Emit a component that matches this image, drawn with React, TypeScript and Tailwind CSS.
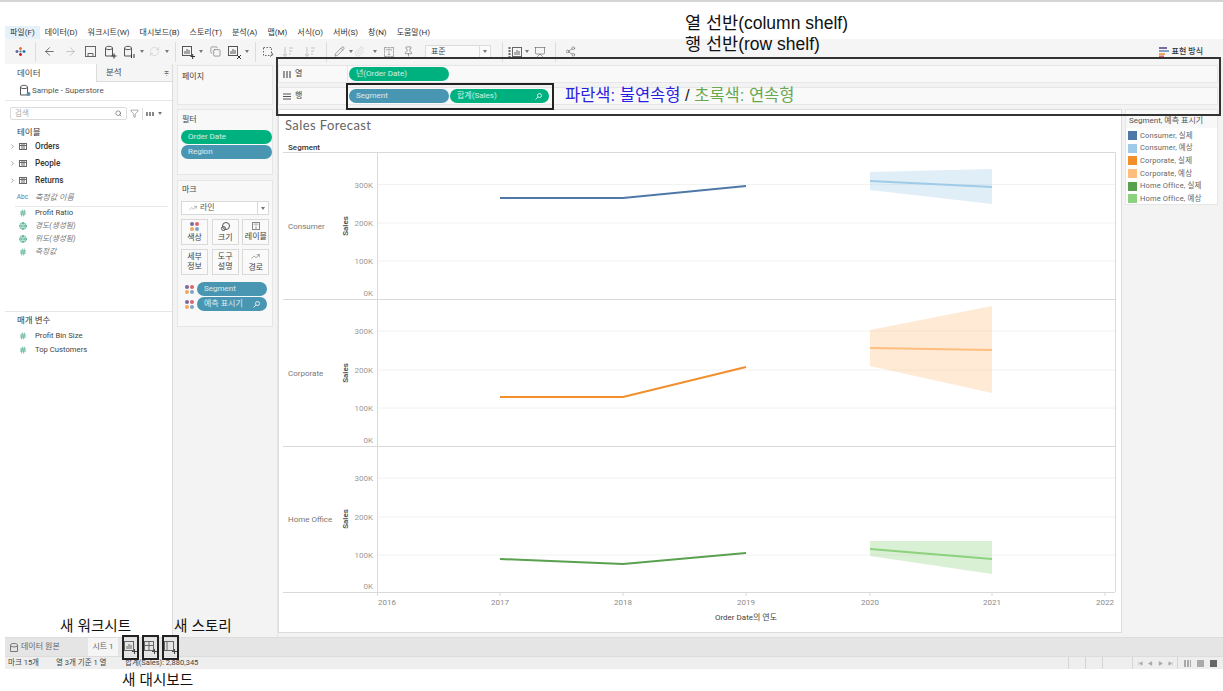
import React from "react";
import {
    ArrowLeft,
    ArrowRight,
    RefreshCw,
    Copy,
    Pencil,
    Paperclip,
    Pin,
    Presentation,
    Share2,
    Search,
    Filter,
    Hash,
    Globe,
    ChevronRight,
    Type,
    TrendingUp,
    SkipBack,
    SkipForward,
    Play,
} from "lucide-react";

const menus = [
    "파일(F)", "데이터(D)", "워크시트(W)", "대시보드(B)", "스토리(T)", "분석(A)",
    "맵(M)", "서식(O)", "서버(S)", "창(N)", "도움말(H)",
];

function Slot({ w, children }: { w: number; children?: React.ReactNode }) {
    return (
        <div className="flex items-center justify-center shrink-0" style={{ width: w }}>
            {children}
        </div>
    );
}

function Divider() {
    return <div className="w-px h-[20px] bg-[#dcdcdc] shrink-0" />;
}

function Caret() {
    return <div className="w-0 h-0 shrink-0 border-x-[2px] border-x-transparent border-t-[3px] border-t-[#777]" />;
}

function TinyChart({ mark }: { mark?: React.ReactNode }) {
    return (
        <svg width="14" height="14" viewBox="0 0 14 14" fill="none" stroke="#555" className="shrink-0">
            <rect x="1.5" y="1.5" width="9" height="9" />
            <path d="M4 9V6M6 9V4M8 9V5" />
            {mark}
        </svg>
    );
}

function SheetIcon({ kind }: { kind: "sheet" | "dash" | "story" }) {
    return (
        <svg width="14" height="14" viewBox="0 0 14 14" fill="none" stroke="#666" className="shrink-0">
            <rect x="1.5" y="1.5" width="9" height="9" />
            {kind === "sheet" && <path d="M4 9V6M6 9V4M8 9V5" />}
            {kind === "dash" && <path d="M1.5 5.5H10.5M6 1.5V10.5" />}
            {kind === "story" && <path d="M4 1.5V10.5" />}
            <path d="M9 11.5H14M11.5 9V14" stroke="#444" />
        </svg>
    );
}

function SourceIcon({ mark }: { mark: React.ReactNode }) {
    return (
        <svg width="13" height="14" viewBox="0 0 13 14" fill="none" stroke="#555" className="shrink-0">
            <path d="M1.5 3C1.5 .8 8.5 .8 8.5 3V11H1.5ZM1.5 3.5C3 5 7 5 8.5 3.5" />
            {mark}
        </svg>
    );
}

function SortIcon() {
    return (
        <svg width="12" height="12" viewBox="0 0 12 12" fill="none" stroke="#c4c4c4" className="shrink-0">
            <path d="M3 1V10M1 8L3 10.5L5 8M7 2H11M7 5H10M7 8H9" />
        </svg>
    );
}

function ZoomMark() {
    return (
        <svg width="7" height="7" viewBox="0 0 7 7" fill="none" stroke="currentColor" className="shrink-0">
            <circle cx="4.5" cy="2.5" r="2" />
            <path d="M3 4L.5 6.5" />
        </svg>
    );
}

function TableIcon() {
    return (
        <svg width="8" height="7" viewBox="0 0 8 7" className="shrink-0">
            <rect x="0.5" y="0.5" width="7" height="6" fill="#fff" stroke="#666" />
            <path d="M0 2.5H8M3 0V7M5 0V7" stroke="#666" />
        </svg>
    );
}

function Dots() {
    return (
        <div className="grid grid-cols-2 gap-[1px] w-[9px] shrink-0">
            <span className="w-[4px] h-[4px] rounded-full bg-[#7b6a9b]" />
            <span className="w-[4px] h-[4px] rounded-full bg-[#e0636b]" />
            <span className="w-[4px] h-[4px] rounded-full bg-[#f2a65a]" />
            <span className="w-[4px] h-[4px] rounded-full bg-[#7fa3cc]" />
        </div>
    );
}

function Pill({ color, label, w, icon }: { color: "blue" | "green"; label: string; w: string; icon?: boolean }) {
    return (
        <div
            className={`${w} h-[14px] rounded-full flex items-center justify-between pl-[7px] pr-[7px] text-[8px] text-white/80 shrink-0 ${
                color === "blue" ? "bg-[#4996b2]" : "bg-[#00b180]"
            }`}
        >
            <span>{label}</span>
            {icon && <ZoomMark />}
        </div>
    );
}

function Field({ icon, label, italic, y }: { icon: React.ReactNode; label: string; italic?: boolean; y: string }) {
    return (
        <div className={`flex items-center ${y} pl-[9px] shrink-0`}>
            <div className="w-[17px] flex justify-center shrink-0">{icon}</div>
            <span className={`ml-[4px] text-[7.7px] ${italic ? "italic text-[#777]" : "text-[#444]"}`}>{label}</span>
        </div>
    );
}

function TableRow({ label }: { label: string }) {
    return (
        <div className="flex items-center h-[17px] pl-[4px] shrink-0">
            <ChevronRight size={7} className="text-[#666] shrink-0" />
            <div className="ml-[3px]"><TableIcon /></div>
            <span className="ml-[8px] text-[8.2px] font-medium text-[#333]">{label}</span>
        </div>
    );
}

function MarkButton({ icon, children }: { icon?: React.ReactNode; children: React.ReactNode }) {
    return (
        <div className="w-[27px] h-[26px] border border-[#d9d9d9] bg-[#fafafa] flex flex-col items-center justify-center text-[8px] leading-[10px] text-[#444] text-center">
            {icon}
            {children}
        </div>
    );
}

function LegendRow({ color, label }: { color: string; label: string }) {
    return (
        <div className="flex items-center h-[12.7px] gap-[3px] pl-[2px]">
            <span className={`w-[9px] h-[9px] shrink-0 ${color}`} />
            <span className="text-[7.5px] text-[#666] tracking-[0.15px] whitespace-nowrap">{label}</span>
        </div>
    );
}

const panes = [
    {
        name: "Consumer", labelY: 226, ticks: [184.5, 223, 261], zeroY: 299,
        actual: "500,198 623,198 746,186", forecast: "870,181 992,187",
        band: "870,172 992,169 992,204 870,190", solid: "#4e79a7", light: "#a0cbe8",
    },
    {
        name: "Corporate", labelY: 373, ticks: [331, 370, 408], zeroY: 446,
        actual: "500,397 623,397 746,367", forecast: "870,348 992,350",
        band: "870,330 992,306 992,393 870,366", solid: "#f28e2b", light: "#ffbe7d",
    },
    {
        name: "Home Office", labelY: 519, ticks: [478, 517, 555], zeroY: 592,
        actual: "500,559 623,564 746,553", forecast: "870,549 992,559",
        band: "870,541 992,541 992,574 870,556", solid: "#59a14f", light: "#8cd17d",
    },
];

function ForecastChart() {
    const years = [[387, "2016"], [500, "2017"], [623, "2018"], [746, "2019"], [870, "2020"], [992, "2021"], [1105, "2022"]] as const;
    return (
        <svg width="842" height="490" viewBox="279 140 842 490" className="block" fontFamily="Roboto, 'Noto Sans CJK KR', sans-serif">
            <text x="288" y="150" fontSize="8" fontWeight="500" fill="#333">Segment</text>
            <path d="M283 152.5H1115.5V592M377.5 152V592" fill="none" stroke="#d9d9d9" />
            {panes.map((p) => (
                <g key={p.name}>
                    {p.ticks.map((y, i) => (
                        <g key={y}>
                            <line x1="378" x2="1115" y1={y} y2={y} stroke="#f2f2f2" />
                            <text x="373" y={y + 3} textAnchor="end" fontSize="8" fill="#9a9a9a">{["300K", "200K", "100K"][i]}</text>
                        </g>
                    ))}
                    <text x="373" y={p.zeroY - 3} textAnchor="end" fontSize="8" fill="#9a9a9a">0K</text>
                    <line x1="283" x2="1115" y1={p.zeroY + 0.5} y2={p.zeroY + 0.5} stroke="#d9d9d9" />
                    <text x="288" y={p.labelY + 3} fontSize="8" fill="#777">{p.name}</text>
                    <text
                        transform={`translate(348 ${p.labelY}) rotate(-90)`}
                        textAnchor="middle"
                        fontSize="8"
                        fontWeight="500"
                        fill="#444"
                    >
                        Sales
                    </text>
                    <polygon points={p.band} fill={p.light} opacity="0.32" />
                    <polyline points={p.forecast} fill="none" stroke={p.light} strokeWidth="2" />
                    <polyline points={p.actual} fill="none" stroke={p.solid} strokeWidth="2" />
                </g>
            ))}
            {years.map(([x, y]) => (
                <g key={y}>
                    <line x1={x === 387 ? 377.5 : x} x2={x === 387 ? 377.5 : x} y1="592" y2="596" stroke="#d9d9d9" />
                    <text x={x} y="605" textAnchor="middle" fontSize="8" fill="#8a8a8a">{y}</text>
                </g>
            ))}
            <text x="746" y="620" textAnchor="middle" fontSize="8" fill="#444">Order Date의 연도</text>
        </svg>
    );
}

export default function App() {
    return (
        <div className="relative w-[1223px] h-[691px] overflow-hidden bg-white flex flex-col font-['Roboto','Noto_Sans_CJK_KR',sans-serif]">
            <div className="h-[2px] bg-[#d4d4d4] shrink-0" />
            <div className="h-[24px] shrink-0" />

            {/* menu */}
            <div className="h-[13px] ml-[5px] flex items-center text-[8px] text-[#333] shrink-0">
                {menus.map((m, i) => (
                    <span key={m} className={`px-[5px] h-full flex items-center whitespace-nowrap ${i === 0 ? "bg-[#e5f1fb]" : ""}`}>{m}</span>
                ))}
            </div>

            {/* toolbar */}
            <div className="h-[25px] ml-[5px] bg-[#f5f5f5] flex items-center shrink-0 text-[#666]">
                <Slot w={30}>
                    <svg width="11" height="11" viewBox="0 0 11 11" strokeWidth="1.4">
                        <path d="M5.5 1V4M4 2.5H7" stroke="#e8762d" />
                        <path d="M5.5 7V10M4 8.5H7" stroke="#c72035" />
                        <path d="M2 4V7M.5 5.5H3.5" stroke="#5b6591" />
                        <path d="M9 4V7M7.5 5.5H10.5" stroke="#1f77b4" />
                        <path d="M5.5 4.5V6.5M4.5 5.5H6.5" stroke="#59879b" />
                    </svg>
                </Slot>
                <Divider />
                <Slot w={26}><ArrowLeft size={13} strokeWidth={1.5} className="text-[#555]" /></Slot>
                <Slot w={16}><ArrowRight size={13} strokeWidth={1.5} className="text-[#bbb]" /></Slot>
                <Slot w={24}>
                    <svg width="11" height="11" viewBox="0 0 11 11" fill="none" stroke="#666">
                        <rect x="0.5" y="0.5" width="10" height="10" />
                        <path d="M3 10.5V7.5H8V10.5" />
                    </svg>
                </Slot>
                <Slot w={16}><SourceIcon mark={<path d="M7.5 11H12.5M10 8.5V13.5" stroke="#333" />} /></Slot>
                <Slot w={22}><SourceIcon mark={<path d="M8.5 9V13M11 9V13" stroke="#333" />} /></Slot>
                <Slot w={4}><Caret /></Slot>
                <Slot w={20}><RefreshCw size={11} strokeWidth={1.2} className="text-[#c4c4c4]" /></Slot>
                <Slot w={6}><Caret /></Slot>
                <Slot w={5} />
                <Divider />
                <Slot w={24}><TinyChart mark={<path d="M9.5 11.5H14M11.7 9V14" stroke="#333" />} /></Slot>
                <Slot w={2}><Caret /></Slot>
                <Slot w={26}><Copy size={11} strokeWidth={1.3} /></Slot>
                <Slot w={12}><TinyChart mark={<path d="M10 10L14 14M14 10L10 14" stroke="#333" />} /></Slot>
                <Slot w={14}><Caret /></Slot>
                <Slot w={1} />
                <Divider />
                <Slot w={24}>
                    <svg width="12" height="12" viewBox="0 0 12 12" fill="none" stroke="#666">
                        <rect x="1.5" y="1.5" width="8" height="8" strokeDasharray="1.5 1.5" />
                        <path d="M9 6L11 8.5L8 10.5" />
                    </svg>
                </Slot>
                <Slot w={16}><SortIcon /></Slot>
                <Slot w={28}><SortIcon /></Slot>
                <Slot w={2} />
                <Divider />
                <Slot w={24}><Pencil size={11} strokeWidth={1.3} /></Slot>
                <Slot w={0}><Caret /></Slot>
                <Slot w={16}><Paperclip size={11} strokeWidth={1.2} className="text-[#c4c4c4]" /></Slot>
                <Slot w={16}><Caret /></Slot>
                <Slot w={12}><Type size={10} strokeWidth={1.3} className="border border-dashed border-[#aaa] shrink-0" /></Slot>
                <Slot w={26}><Pin size={11} strokeWidth={1.3} /></Slot>
                <div className="ml-[4px] w-[66px] h-[14px] border border-[#dcdcdc] bg-[#fafafa] flex items-center justify-between text-[8px] text-[#444] shrink-0">
                    <span className="pl-[5px]">표준</span>
                    <span className="w-[11px] h-full border-l border-[#dcdcdc] flex items-center justify-center"><Caret /></span>
                </div>
                <Slot w={11} />
                <Divider />
                <Slot w={24}>
                    <svg width="14" height="12" viewBox="0 0 14 12" fill="none" stroke="#666">
                        <path d="M1.5 1V11" strokeDasharray="2 1" strokeWidth="2" />
                        <rect x="4.5" y="1.5" width="9" height="9" />
                        <path d="M7 9V6M9 9V4M11 9V5" />
                    </svg>
                </Slot>
                <Slot w={0}><Caret /></Slot>
                <Slot w={26}><Presentation size={12} strokeWidth={1.3} /></Slot>
                <Slot w={2} />
                <Divider />
                <Slot w={28}><Share2 size={11} strokeWidth={1.3} /></Slot>
                <div className="ml-auto mr-[20px] flex items-center gap-[3px] text-[8px] font-medium text-[#333]">
                    <svg width="10" height="10" viewBox="0 0 10 10">
                        <rect y="0" width="8" height="2" fill="#7b6a9b" />
                        <rect y="3" width="10" height="2" fill="#7fa3cc" />
                        <rect y="6" width="6" height="2" fill="#f2a65a" />
                        <rect y="8.5" width="5" height="1.5" fill="#e0636b" />
                    </svg>
                    표현 방식
                </div>
            </div>

            {/* workspace */}
            <div className="flex h-[573px] shrink-0 ml-[5px]">
                {/* data pane */}
                <div className="w-[168px] shrink-0 border-r border-[#dcdcdc] bg-white flex flex-col">
                    <div className="h-[18px] flex text-[8.5px] text-[#444] shrink-0">
                        <div className="w-[91px] pl-[12px] flex items-center">데이터</div>
                        <div className="flex-1 pl-[9px] pr-[3px] flex items-center justify-between bg-[#f5f5f5] border-l border-b border-[#dcdcdc]">
                            <span>분석</span>
                            <span className="text-[6px] text-[#777]">≑</span>
                        </div>
                    </div>
                    <div className="h-[19px] flex items-center pl-[14px] border-b border-[#e6e6e6] text-[8px] text-[#555] shrink-0">
                        <SourceIcon mark={<circle cx="9.5" cy="10" r="2" fill="#4f8fb5" stroke="none" />} />
                        Sample - Superstore
                    </div>
                    <div className="h-[25px] flex items-center pl-[5px] shrink-0">
                        <div className="w-[117px] h-[13px] border border-[#dcdcdc] rounded-[2px] flex items-center justify-between px-[4px] text-[7.5px] text-[#aaa]">
                            검색
                            <Search size={7} className="text-[#555]" />
                        </div>
                        <Filter size={9} strokeWidth={1.3} className="ml-[3px] text-[#555]" />
                        <div className="ml-[3px] w-px h-[12px] bg-[#dcdcdc]" />
                        <div className="ml-[3px] w-[8px] h-[4px] bg-[repeating-linear-gradient(90deg,#888_0_2px,#fff_2px_3px)]" />
                        <div className="ml-[4px]"><Caret /></div>
                    </div>
                    <div className="h-[12px] pl-[12px] text-[8.5px] text-[#333] flex items-center shrink-0">테이블</div>
                    <TableRow label="Orders" />
                    <TableRow label="People" />
                    <TableRow label="Returns" />
                    <div className="flex items-center h-[16px] mt-[1px] pl-[9px] mr-[4px] shrink-0">
                        <span className="w-[17px] text-center text-[6.5px] text-[#4f7ea8]">Abc</span>
                        <span className="ml-[4px] text-[8px] italic text-[#777]">측정값 이름</span>
                    </div>
                    <div className="h-px bg-[#e6e6e6] ml-[10px] mr-[4px] shrink-0" />
                    <Field y="h-[12px]" icon={<Hash size={8} className="text-[#2a9d75]" />} label="Profit Ratio" />
                    <Field y="h-[13px]" italic icon={<Globe size={8} className="text-[#2a9d75]" />} label="경도(생성됨)" />
                    <Field y="h-[13px]" italic icon={<Globe size={8} className="text-[#2a9d75]" />} label="위도(생성됨)" />
                    <Field y="h-[13px]" italic icon={<Hash size={8} className="text-[#2a9d75]" />} label="측정값" />
                    <div className="h-[54px] border-b border-[#e6e6e6] shrink-0" />
                    <div className="h-[15px] mt-[1px] pl-[12px] flex items-center text-[8.5px] text-[#333] shrink-0">매개 변수</div>
                    <Field y="h-[14px] mt-[1px]" icon={<Hash size={8} className="text-[#2a9d75]" />} label="Profit Bin Size" />
                    <Field y="h-[14px]" icon={<Hash size={8} className="text-[#2a9d75]" />} label="Top Customers" />
                </div>

                {/* pages / filters / marks */}
                <div className="w-[105px] shrink-0 bg-[#f3f3f3] pl-[4px] pr-[4px] pt-[1px] flex flex-col gap-[4px] border-r border-[#e6e6e6]">
                    <div className="h-[40px] bg-[#f8f8f8] border border-[#e6e6e6] px-[4px] pt-[5px] text-[8px] text-[#444] shrink-0">페이지</div>
                    <div className="h-[66px] bg-[#f8f8f8] border border-[#e6e6e6] px-[3px] pt-[5px] shrink-0">
                        <div className="text-[8px] text-[#444] px-[1px] leading-[10px] mb-[5px]">필터</div>
                        <div className="flex flex-col gap-[1px]">
                            <Pill color="green" label="Order Date" w="w-[91px]" />
                            <Pill color="blue" label="Region" w="w-[91px]" />
                        </div>
                    </div>
                    <div className="h-[147px] mt-[1px] bg-[#f8f8f8] border border-[#e6e6e6] px-[3px] pt-[4px] shrink-0">
                        <div className="text-[8px] text-[#444] px-[1px] leading-[10px]">마크</div>
                        <div className="mt-[6px] h-[14px] border border-[#d9d9d9] bg-white flex items-center justify-between text-[8px] text-[#555]">
                            <span className="flex items-center gap-[3px] pl-[7px]"><TrendingUp size={8} strokeWidth={1.2} />라인</span>
                            <span className="w-[11px] h-full border-l border-[#d9d9d9] flex items-center justify-center"><Caret /></span>
                        </div>
                        <div className="mt-[4px] grid grid-cols-3 gap-x-[4px] gap-y-[4px]">
                            <MarkButton icon={<div className="mb-[2px]"><Dots /></div>}>색상</MarkButton>
                            <MarkButton icon={
                                <svg width="9" height="9" viewBox="0 0 9 9" fill="none" stroke="#555" className="mb-[2px]">
                                    <circle cx="5" cy="4" r="3.5" />
                                    <circle cx="2.5" cy="6.5" r="2" />
                                </svg>
                            }>크기</MarkButton>
                            <MarkButton icon={<Type size={8} strokeWidth={1.3} className="mb-[2px] border border-[#888]" />}>레이블</MarkButton>
                            <MarkButton>세부<br />정보</MarkButton>
                            <MarkButton>도구<br />설명</MarkButton>
                            <MarkButton icon={<TrendingUp size={9} strokeWidth={1.2} className="mb-[2px]" />}>경로</MarkButton>
                        </div>
                        <div className="mt-[7px] flex flex-col gap-[1px]">
                            <div className="flex items-center pl-[4px] gap-[3px]"><Dots /><Pill color="blue" label="Segment" w="w-[70px]" /></div>
                            <div className="flex items-center pl-[4px] gap-[3px]"><Dots /><Pill color="blue" label="예측 표시기" w="w-[70px]" icon /></div>
                        </div>
                    </div>
                </div>

                {/* shelves + view */}
                <div className="flex-1 min-w-0 bg-[#f3f3f3] pt-[1px] pr-[5px] flex flex-col">
                    <div className="h-[18px] bg-[#f9f9f9] border border-[#e6e6e6] flex items-center shrink-0">
                        <div className="w-[69px] h-full flex items-center pl-[4px] gap-[4px] text-[8px] text-[#444] border-r border-[#e6e6e6]">
                            <svg width="8" height="7" viewBox="0 0 8 7"><path d="M1 0V7M4 0V7M7 0V7" stroke="#555" strokeWidth="1.2" /></svg>
                            열
                        </div>
                        <Pill color="green" label="년(Order Date)" w="ml-[1px] w-[100px]" />
                    </div>
                    <div className="h-[18px] mt-[4px] bg-[#f9f9f9] border border-[#e6e6e6] flex items-center shrink-0">
                        <div className="w-[69px] h-full flex items-center pl-[4px] gap-[4px] text-[8px] text-[#444]">
                            <svg width="8" height="7" viewBox="0 0 8 7"><path d="M0 1H8M0 3.5H8M0 6H8" stroke="#555" strokeWidth="1.1" /></svg>
                            행
                        </div>
                        <Pill color="blue" label="Segment" w="ml-[1px] w-[100px]" />
                        <Pill color="green" label="합계(Sales)" w="ml-[1px] w-[99px]" icon />
                    </div>
                    <div className="flex gap-[3px] mt-[4px] flex-1 min-h-0">
                        <div className="w-[844px] h-[524px] bg-white border border-[#dcdcdc] shrink-0">
                            <div className="h-[30px] pl-[6px] pt-[8px] text-[13px] leading-[14px] text-[#666] tracking-[0.4px] font-['Lato','Roboto',sans-serif]">Sales Forecast</div>
                            <ForecastChart />
                        </div>
                        <div className="flex-1 h-[96px] bg-white border border-[#e6e6e6] text-[#555]">
                            <div className="h-[18px] bg-[#f8f8f8] flex items-end pl-[3px] pb-[1px] text-[8px] whitespace-nowrap">Segment, 예측 표시기</div>
                            <div className="pt-[1px]">
                                <LegendRow color="bg-[#4e79a7]" label="Consumer, 실제" />
                                <LegendRow color="bg-[#a0cbe8]" label="Consumer, 예상" />
                                <LegendRow color="bg-[#f28e2b]" label="Corporate, 실제" />
                                <LegendRow color="bg-[#ffbe7d]" label="Corporate, 예상" />
                                <LegendRow color="bg-[#59a14f]" label="Home Office, 실제" />
                                <LegendRow color="bg-[#8cd17d]" label="Home Office, 예상" />
                            </div>
                        </div>
                    </div>
                </div>
            </div>

            {/* sheet tabs */}
            <div className="h-[19px] ml-[5px] bg-[#e5e5e5] border-t border-[#dcdcdc] flex items-center text-[8px] text-[#666] shrink-0">
                <div className="w-[83px] pl-[5px] flex items-center gap-[3px]">
                    <svg width="8" height="9" viewBox="0 0 8 9" fill="none" stroke="#777">
                        <path d="M.5 2C.5 0 7.5 0 7.5 2V8.5H.5ZM.5 3C2 4.2 6 4.2 7.5 3" />
                    </svg>
                    데이터 원본
                </div>
                <div className="w-[30px] h-full bg-[#f5f5f5] flex items-center justify-center">시트 1</div>
                <Slot w={24}><SheetIcon kind="sheet" /></Slot>
                <Slot w={16}><SheetIcon kind="dash" /></Slot>
                <Slot w={24}><SheetIcon kind="story" /></Slot>
            </div>

            {/* status bar */}
            <div className="h-[13px] ml-[5px] bg-[#eeeeee] border-t border-[#dcdcdc] flex items-center text-[7.5px] text-[#444] shrink-0">
                <span className="w-[51px] pl-[3px]">마크 15개</span>
                <span className="w-[69px]">열 3개 기준 1 열</span>
                <span>합계(Sales): 2,880,345</span>
                <div className="ml-auto flex items-center h-full text-[#aaa]">
                    <div className="w-[17px] h-full border-l border-[#d4d4d4]" />
                    <div className="w-[17px] h-full border-l border-[#d4d4d4]" />
                    <div className="w-[30px] h-full border-l border-[#d4d4d4]" />
                    <div className="w-[45px] h-full border-l border-[#d4d4d4] flex items-center justify-center gap-[5px]">
                        <SkipBack size={5} fill="currentColor" />
                        <Play size={5} fill="currentColor" className="rotate-180" />
                        <Play size={5} fill="currentColor" />
                        <SkipForward size={5} fill="currentColor" />
                    </div>
                    <div className="w-[46px] h-full border-l border-[#d4d4d4] flex items-center justify-center gap-[6px]">
                        <span className="w-[7px] h-[7px] bg-[repeating-linear-gradient(90deg,#aaa_0_2px,#eee_2px_3px)]" />
                        <span className="w-[7px] h-[7px] bg-[#aaa]" />
                        <span className="w-[7px] h-[7px] bg-[#666]" />
                    </div>
                </div>
            </div>

            <div className="h-[22px] shrink-0" />

            {/* annotations drawn over the app */}
            <div className="absolute left-[276px] top-[57px] w-[945px] h-[59px] border-2 border-[#333] pointer-events-none" />
            <div className="absolute left-[346px] top-[83px] w-[208px] h-[27px] border-2 border-[#222] pointer-events-none" />
            <div className="absolute left-[122px] top-[635px] w-[17px] h-[25px] border-2 border-[#222]" />
            <div className="absolute left-[142px] top-[635px] w-[17px] h-[25px] border-2 border-[#222]" />
            <div className="absolute left-[162px] top-[635px] w-[17px] h-[25px] border-2 border-[#222]" />
            <div className="absolute left-[685px] top-[13px] text-[17.5px] leading-[20px] text-[#111] whitespace-nowrap font-['Liberation_Sans','Noto_Sans_CJK_KR',sans-serif]">열 선반(column shelf)</div>
            <div className="absolute left-[685px] top-[34px] text-[17.5px] leading-[20px] text-[#111] whitespace-nowrap font-['Liberation_Sans','Noto_Sans_CJK_KR',sans-serif]">행 선반(row shelf)</div>
            <div className="absolute left-[565px] top-[85px] text-[16.5px] leading-[20px] whitespace-nowrap font-['Liberation_Sans','Noto_Sans_CJK_KR',sans-serif]">
                <span className="text-[#2a1fe0]">파란색: 불연속형</span>
                <span className="text-[#222]"> / </span>
                <span className="text-[#6aa84f]">초록색: 연속형</span>
            </div>
            <div className="absolute left-[60px] top-[617px] text-[14.6px] leading-[18px] text-[#111] whitespace-nowrap font-['Liberation_Sans','Noto_Sans_CJK_KR',sans-serif]">새 워크시트</div>
            <div className="absolute left-[174px] top-[617px] text-[14.6px] leading-[18px] text-[#111] whitespace-nowrap font-['Liberation_Sans','Noto_Sans_CJK_KR',sans-serif]">새 스토리</div>
            <div className="absolute left-[122px] top-[671px] text-[14.6px] leading-[18px] text-[#111] whitespace-nowrap font-['Liberation_Sans','Noto_Sans_CJK_KR',sans-serif]">새 대시보드</div>
        </div>
    );
}
